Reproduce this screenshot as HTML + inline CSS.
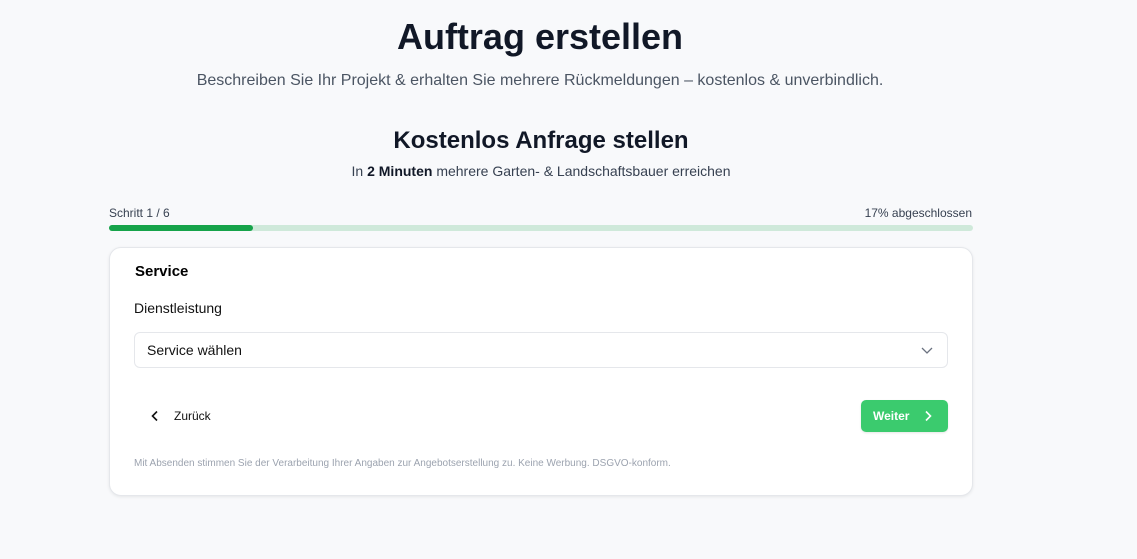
<!DOCTYPE html>
<html><head><meta charset="utf-8"><style>
*{box-sizing:border-box;margin:0;padding:0}
body{width:1137px;height:559px;background:#f8f9fb;font-family:"Liberation Sans",sans-serif;color:#111827;position:relative;overflow:hidden}
.a{position:absolute}
</style></head><body>
<div class="a" style="left:0;width:1080px;top:16px;text-align:center;font-size:36px;font-weight:bold;color:#111827">Auftrag erstellen</div>
<div class="a" style="left:0;width:1080px;top:72px;text-align:center;font-size:16px;color:#4b5563">Beschreiben Sie Ihr Projekt &amp; erhalten Sie mehrere Rückmeldungen – kostenlos &amp; unverbindlich.</div>
<div class="a" style="left:0;width:1082px;top:127px;text-align:center;font-size:24px;font-weight:bold">Kostenlos Anfrage stellen</div>
<div class="a" style="left:0;width:1082px;top:163px;text-align:center;font-size:14px;color:#374151">In <b style="color:#111827">2 Minuten</b> mehrere Garten- &amp; Landschaftsbauer erreichen</div>
<div class="a" style="left:109px;top:206px;font-size:12px;color:#374151">Schritt 1 / 6</div>
<div class="a" style="right:165px;top:206px;font-size:12px;color:#374151">17% abgeschlossen</div>
<div class="a" style="left:109px;top:225px;width:864px;height:6px;border-radius:3px;background:#cfe9da"><div style="width:144px;height:6px;border-radius:3px;background:#16a34a"></div></div>
<div class="a" style="left:109px;top:247px;width:864px;height:249px;background:#fff;border:1px solid #e5e7eb;border-radius:12px;box-shadow:0 1px 3px rgba(0,0,0,.08)">
<div class="a" style="left:25px;top:15px;font-size:15px;font-weight:bold;color:#000">Service</div>
<div class="a" style="left:24px;top:52px;font-size:14px;color:#111">Dienstleistung</div>
<div class="a" style="left:24px;top:84px;width:814px;height:36px;border:1px solid #e5e7eb;border-radius:6px">
<div class="a" style="left:12px;top:9px;font-size:14px;color:#111">Service wählen</div>
<svg class="a" style="right:14px;top:12px" width="12" height="10" viewBox="0 0 12 10"><path d="M1 3l5 5 5-5" fill="none" stroke="#6b7280" stroke-width="1.3"/></svg></div>
<svg class="a" style="left:40px;top:162px" width="10" height="12" viewBox="0 0 10 12"><path d="M7 1.5L2.5 6 7 10.5" fill="none" stroke="#111" stroke-width="1.6"/></svg>
<div class="a" style="left:64px;top:161px;font-size:12px;color:#111">Zurück</div>
<div class="a" style="left:751px;top:152px;width:87px;height:32px;background:#3bcb6e;border-radius:5px;box-shadow:0 1px 2px rgba(0,0,0,.1)">
<div class="a" style="left:12px;top:9px;font-size:12px;font-weight:bold;color:#fff">Weiter</div>
<svg class="a" style="left:62px;top:10px" width="10" height="12" viewBox="0 0 10 12"><path d="M3 1.5L7.5 6 3 10.5" fill="none" stroke="#fff" stroke-width="1.6"/></svg></div>
<div class="a" style="left:24px;top:210px;font-size:10px;color:#9ca3af">Mit Absenden stimmen Sie der Verarbeitung Ihrer Angaben zur Angebotserstellung zu. Keine Werbung. DSGVO-konform.</div>
</div>
</body></html>
